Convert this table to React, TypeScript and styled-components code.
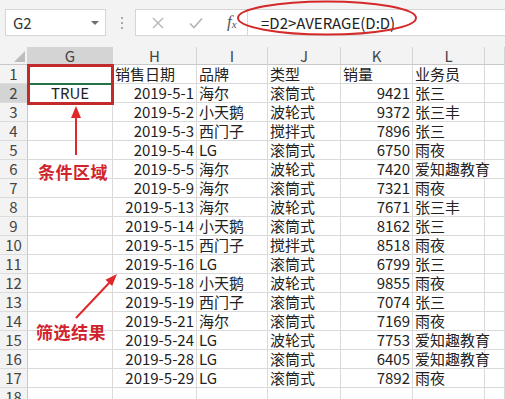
import styled, { createGlobalStyle } from "styled-components";

const FONT = `"Noto Sans CJK SC", "Noto Sans", sans-serif`;
const GRID = "#dadada";
const COLS = "28px 85px 84px 71px 73px 72px 72px 1fr";

const GlobalStyle = createGlobalStyle`
  body {
    margin: 0;
    background: #ffffff;
    font-family: ${FONT};
  }
`;

const Page = styled.div`
  position: relative;
  width: 505px;
  height: 399px;
  overflow: hidden;
  background: #ffffff;
`;

const TopBar = styled.div`
  display: flex;
  align-items: flex-start;
  height: 47px;
  padding: 9px 0 0 5px;
  box-sizing: border-box;
  background: #f3f3f3;
`;

const NameBox = styled.div`
  display: flex;
  align-items: center;
  justify-content: space-between;
  width: 101px;
  height: 27px;
  padding: 0 6px 0 7px;
  box-sizing: border-box;
  background: #ffffff;
  border: 1px solid #d6d6d6;
  font-size: 15px;
  line-height: 25px;
  color: #333;
`;

const Caret = styled.span`
  width: 0;
  height: 0;
  border-left: 4px solid transparent;
  border-right: 4px solid transparent;
  border-top: 4px solid #6e6e6e;
`;

const Dots = styled.div`
  display: flex;
  flex-direction: column;
  gap: 3px;
  margin: 8px 12px 0 15px;

  span {
    width: 2px;
    height: 2px;
    background: #a8a8a8;
  }
`;

const FxBox = styled.div`
  display: flex;
  align-items: center;
  width: 112px;
  height: 27px;
  padding-left: 16px;
  gap: 25px;
  box-sizing: border-box;
  background: #ffffff;
  border: 1px solid #d6d6d6;
  border-right: none;
`;

const FxText = styled.span`
  font-family: "Liberation Serif", serif;
  font-style: italic;
  font-size: 17px;
  line-height: 20px;
  color: #555;
  margin-left: -1px;

  sub {
    font-size: 11px;
    vertical-align: -1px;
  }
`;

const FormulaInput = styled.div`
  flex: 1;
  display: flex;
  align-items: center;
  height: 27px;
  padding-left: 13px;
  box-sizing: border-box;
  background: #ffffff;
  border: 1px solid #d6d6d6;
  border-right: none;
  font-size: 15px;
  line-height: 25px;
  color: #222;
`;

const Sheet = styled.div`
  display: flex;
  flex-direction: column;
`;

const Row = styled.div<{ header?: boolean }>`
  display: grid;
  grid-template-columns: ${COLS};
  height: ${({ header }) => (header ? "18px" : "19px")};
  line-height: ${({ header }) => (header ? "17px" : "18px")};
`;

const HeadCell = styled.div<{ active?: boolean }>`
  display: flex;
  align-items: center;
  justify-content: center;
  position: relative;
  background: ${({ active }) => (active ? "#d4d4d4" : "#f3f3f3")};
  border-right: 1px solid #d4d4d4;
  border-bottom: 1px solid #c8c8c8;
  box-sizing: border-box;
  font-size: 15px;
  color: #444;
`;

const RowNum = styled.div<{ active?: boolean }>`
  display: flex;
  align-items: center;
  justify-content: center;
  background: ${({ active }) => (active ? "#d4d4d4" : "#f3f3f3")};
  border-right: 1px solid #c8c8c8;
  border-bottom: 1px solid #dcdcdc;
  box-sizing: border-box;
  font-size: 15px;
  color: #444;
`;

const Cell = styled.div<{ align?: "left" | "right" | "center" }>`
  display: flex;
  align-items: center;
  justify-content: ${({ align }) =>
    align === "right" ? "flex-end" : align === "center" ? "center" : "flex-start"};
  padding: 0 2px 0 2px;
  border-right: 1px solid ${GRID};
  border-bottom: 1px solid ${GRID};
  box-sizing: border-box;
  font-size: 15px;
  color: #222;
  white-space: nowrap;
  min-width: 0;
`;

const Corner = styled.svg`
  position: absolute;
  right: 2px;
  bottom: 2px;
`;

const Overlay = styled.svg`
  position: absolute;
  left: 0;
  top: 0;
  pointer-events: none;
`;

const Selection = styled.div`
  position: absolute;
  left: 27px;
  top: 64px;
  width: 87px;
  height: 41px;
  border: 3px solid #c32a2c;
  box-sizing: border-box;
`;

const ActiveLine = styled.div`
  position: absolute;
  left: 30px;
  top: 83px;
  width: 81px;
  height: 2px;
  background: #217346;
`;

const Note = styled.div<{ top: number; left: number }>`
  position: absolute;
  top: ${({ top }) => top}px;
  left: ${({ left }) => left}px;
  font-size: 17px;
  line-height: 22px;
  font-weight: 700;
  color: #d0232b;
  letter-spacing: 0.5px;
`;

type Rec = [string, string, string, string, string];

const data: Rec[] = [
  ["2019-5-1", "海尔", "滚筒式", "9421", "张三"],
  ["2019-5-2", "小天鹅", "波轮式", "9372", "张三丰"],
  ["2019-5-3", "西门子", "搅拌式", "7896", "张三"],
  ["2019-5-4", "LG", "滚筒式", "6750", "雨夜"],
  ["2019-5-5", "海尔", "波轮式", "7420", "爱知趣教育"],
  ["2019-5-9", "海尔", "滚筒式", "7321", "雨夜"],
  ["2019-5-13", "海尔", "波轮式", "7671", "张三丰"],
  ["2019-5-14", "小天鹅", "滚筒式", "8162", "张三"],
  ["2019-5-15", "西门子", "搅拌式", "8518", "雨夜"],
  ["2019-5-16", "LG", "滚筒式", "6799", "张三"],
  ["2019-5-18", "小天鹅", "波轮式", "9855", "雨夜"],
  ["2019-5-19", "西门子", "滚筒式", "7074", "张三"],
  ["2019-5-21", "海尔", "滚筒式", "7169", "雨夜"],
  ["2019-5-24", "LG", "波轮式", "7753", "爱知趣教育"],
  ["2019-5-28", "LG", "滚筒式", "6405", "爱知趣教育"],
  ["2019-5-29", "LG", "滚筒式", "7892", "雨夜"],
];

const letters = ["G", "H", "I", "J", "K", "L", ""];

const App = () => {
  return (
    <Page>
      <GlobalStyle />
      <TopBar>
        <NameBox>
          G2
          <Caret />
        </NameBox>
        <Dots>
          <span />
          <span />
          <span />
        </Dots>
        <FxBox>
          <svg width="12" height="12" viewBox="0 0 12 12">
            <path d="M1 1 L11 11 M11 1 L1 11" stroke="#b4b4b4" strokeWidth="1.4" />
          </svg>
          <svg width="14" height="12" viewBox="0 0 14 12">
            <path d="M1 6.5 L5 10.5 L13 1.5" stroke="#b4b4b4" strokeWidth="1.6" fill="none" />
          </svg>
          <FxText>
            f<sub>x</sub>
          </FxText>
        </FxBox>
        <FormulaInput>=D2&gt;AVERAGE(D:D)</FormulaInput>
      </TopBar>

      <Sheet>
        <Row header>
          <HeadCell>
            <Corner width="11" height="11" viewBox="0 0 11 11">
              <polygon points="11,0 11,11 0,11" fill="#bdbdbd" />
            </Corner>
          </HeadCell>
          {letters.map((l, i) => (
            <HeadCell key={i} active={l === "G"}>
              {l}
            </HeadCell>
          ))}
        </Row>
        <Row>
          <RowNum>1</RowNum>
          <Cell />
          <Cell>销售日期</Cell>
          <Cell>品牌</Cell>
          <Cell>类型</Cell>
          <Cell>销量</Cell>
          <Cell>业务员</Cell>
          <Cell />
        </Row>
        {data.map((r, i) => (
          <Row key={i}>
            <RowNum active={i === 0}>{i + 2}</RowNum>
            <Cell align="center">{i === 0 ? "TRUE" : ""}</Cell>
            <Cell align="right">{r[0]}</Cell>
            <Cell>{r[1]}</Cell>
            <Cell>{r[2]}</Cell>
            <Cell align="right">{r[3]}</Cell>
            <Cell>{r[4]}</Cell>
            <Cell />
          </Row>
        ))}
        <Row>
          <RowNum>18</RowNum>
          {letters.map((_, i) => (
            <Cell key={i} />
          ))}
        </Row>
      </Sheet>

      <ActiveLine />
      <Selection />

      <Note top={161} left={38}>条件区域</Note>
      <Note top={321} left={36}>筛选结果</Note>

      <Overlay width="505" height="399" viewBox="0 0 505 399">
        <ellipse cx="327" cy="18" rx="89" ry="16.5" fill="none" stroke="#d42a2a" strokeWidth="2" />
        <line x1="76" y1="155" x2="76" y2="116" stroke="#e0282a" strokeWidth="2" />
        <polygon points="76,106 71,118 81,118" fill="#e0282a" />
        <line x1="76" y1="318" x2="110" y2="282" stroke="#e0282a" strokeWidth="2" />
        <polygon points="117,274 112.1,285.9 105.5,279.7" fill="#e0282a" />
      </Overlay>
    </Page>
  );
};

export default App;
